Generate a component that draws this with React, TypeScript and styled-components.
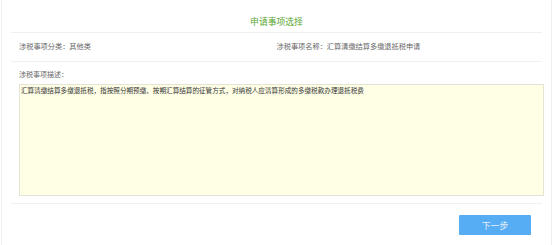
import styled, { createGlobalStyle } from 'styled-components';

const GlobalStyle = createGlobalStyle`
	html, body {
		margin: 0;
		padding: 0;
		background: #fff;
		font-family: 'Noto Sans CJK SC', 'Noto Sans', sans-serif;
	}
`;

const Panel = styled.section`
	box-sizing: border-box;
	width: 551px;
	min-height: 245px;
	margin-left: 1px;
	border-left: 1px solid #eeeeee;
	border-right: 1px solid #eeeeee;
	background: #fff;
`;

const Inner = styled.div`
	padding: 0 9px;
`;

const Header = styled.header`
	box-sizing: border-box;
	height: 33px;
	padding-top: 16px;
	border-bottom: 1px solid #f0f0f0;
	text-align: center;
	font-size: 8.8px;
	line-height: 12px;
	color: #5aa631;
`;

const InfoRow = styled.div`
	box-sizing: border-box;
	display: grid;
	grid-template-columns: 1fr 1fr;
	height: 29px;
	padding: 7px 8px 0;
	border-bottom: 1px solid #f0f0f0;
`;

const Field = styled.span<{ $offset?: number }>`
	font-size: 7.2px;
	line-height: 12px;
	color: #666;
	padding-left: ${(props) => props.$offset ?? 0}px;
	white-space: nowrap;
`;

const DescSection = styled.div`
	box-sizing: border-box;
	padding: 6px 0 7px 8px;
	border-bottom: 1px solid #f0f0f0;
`;

const Label = styled.div`
	font-size: 7px;
	line-height: 12px;
	color: #666;
	margin-bottom: 4px;
`;

const DescBox = styled.textarea`
	display: block;
	box-sizing: border-box;
	width: 525px;
	height: 112px;
	margin: 0;
	padding: 1px 1px;
	border: 1px solid #e3e3d6;
	border-radius: 0;
	background: #ffffe6;
	font-family: 'Noto Sans CJK SC', 'Noto Sans', sans-serif;
	font-size: 6.6px;
	line-height: 9px;
	color: #333;
	resize: none;
	outline: none;
`;

const Footer = styled.footer`
	display: flex;
	justify-content: flex-end;
	padding: 11px 11px 0 0;
`;

const NextButton = styled.button`
	width: 72px;
	height: 20px;
	border: none;
	border-radius: 1px;
	background: #56adf3;
	color: #e6f1fc;
	font-family: 'Noto Sans CJK SC', 'Noto Sans', sans-serif;
	font-size: 8.8px;
	cursor: pointer;
`;

const description =
	'汇算清缴结算多缴退抵税，指按照分期预缴、按期汇算结算的征管方式，对纳税人应清算形成的多缴税款办理退抵税费';

export default function App() {
	return (
		<>
			<GlobalStyle />
			<Panel>
				<Inner>
					<Header>申请事项选择</Header>
					<InfoRow>
						<Field>涉税事项分类：其他类</Field>
						<Field $offset={0}>涉税事项名称：汇算清缴结算多缴退抵税申请</Field>
					</InfoRow>
					<DescSection>
						<Label>涉税事项描述：</Label>
						<DescBox readOnly value={description} />
					</DescSection>
					<Footer>
						<NextButton>下一步</NextButton>
					</Footer>
				</Inner>
			</Panel>
		</>
	);
}
